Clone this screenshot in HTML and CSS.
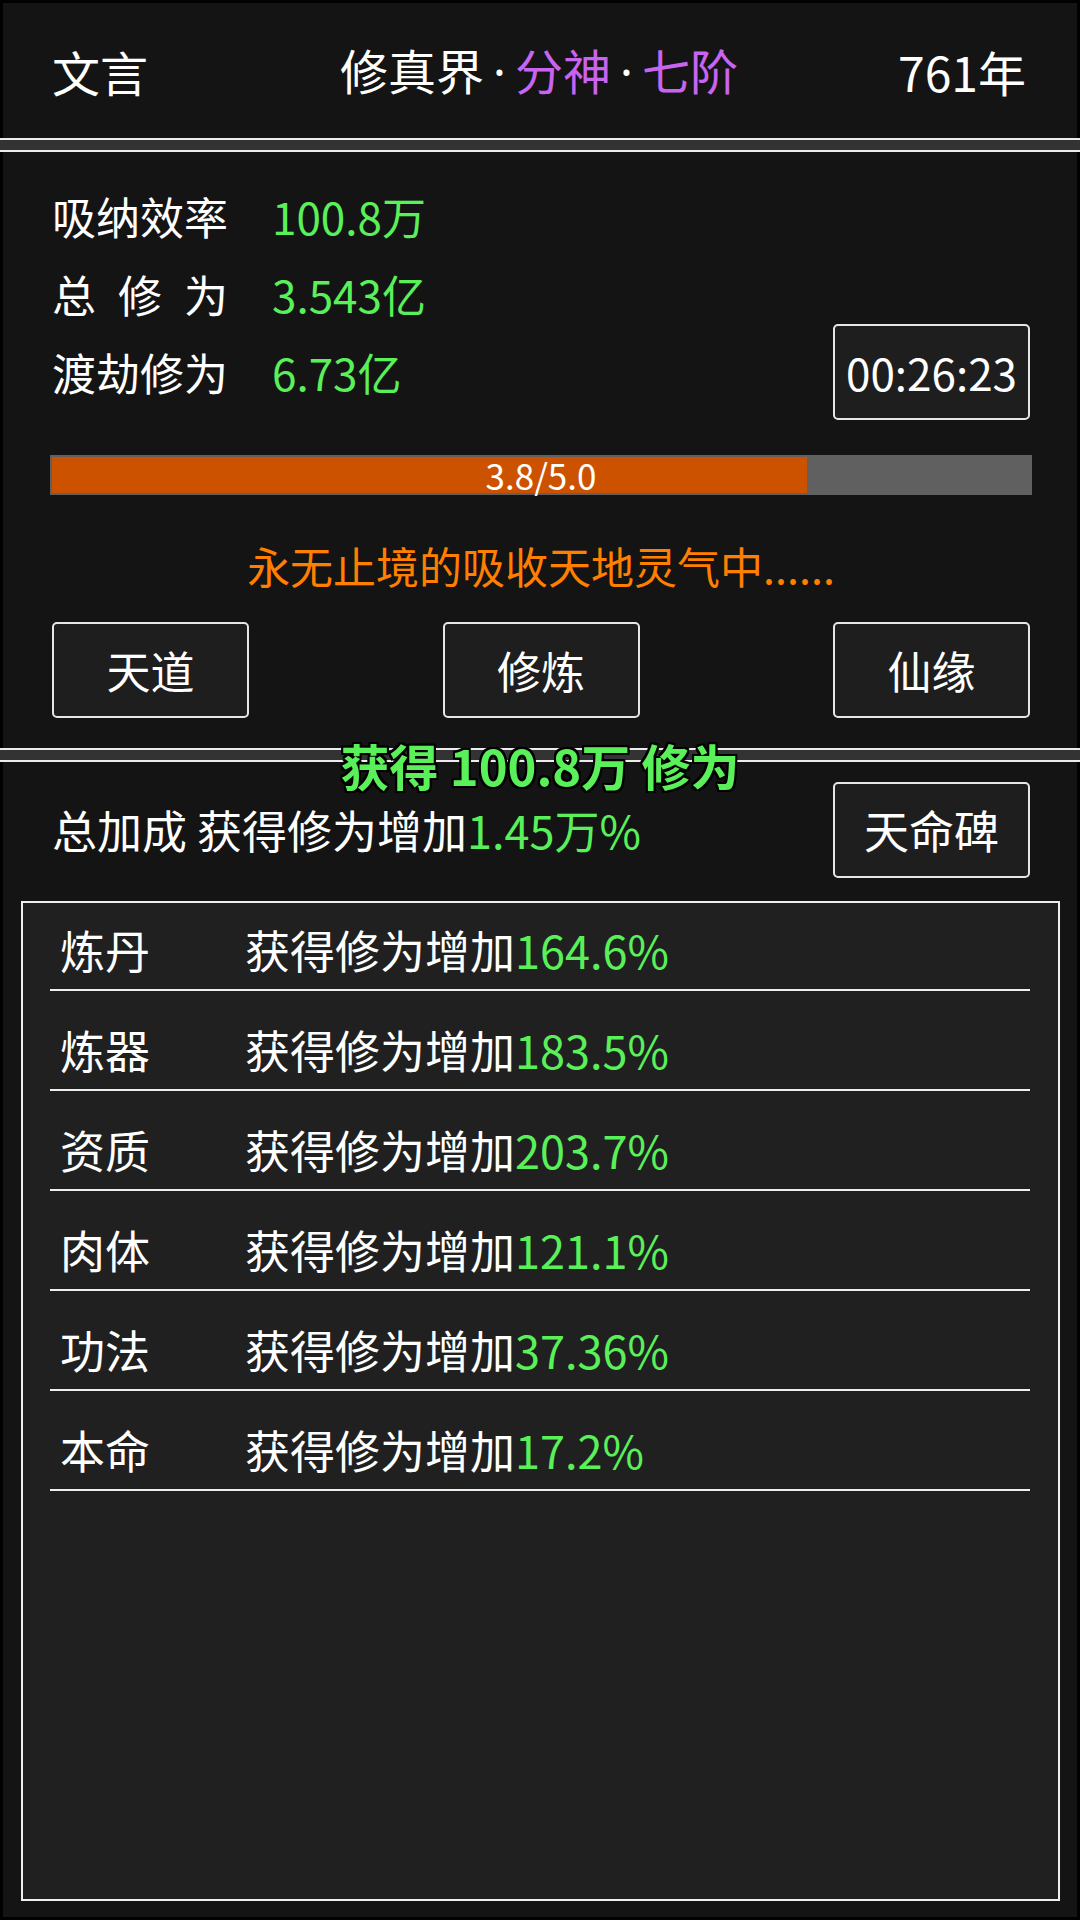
FILE: index.html
```html
<!DOCTYPE html>
<html lang="zh-CN">
<head>
<meta charset="utf-8">
<title>修真界</title>
<link rel="stylesheet" href="styles.css">
</head>
<body>
<div class="screen">
  <header class="panel top-bar">
    <div class="name">文言</div>
    <div class="title">修真界<span class="dot">·</span><span class="realm">分神</span><span class="dot">·</span><span class="realm">七阶</span></div>
    <div class="years">761年</div>
  </header>
  <div class="divider"></div>
  <section class="panel stats">
    <div class="stat-row"><span class="label">吸纳效率</span><span class="value">100.8万</span></div>
    <div class="stat-row"><span class="label spread"><span>总</span><span>修</span><span>为</span></span><span class="value">3.543亿</span></div>
    <div class="stat-row"><span class="label">渡劫修为</span><span class="value">6.73亿</span><div class="timer">00:26:23</div></div>
    <div class="progress"><div class="fill" style="width:77%"></div><span class="progress-text">3.8/5.0</span></div>
    <p class="status">永无止境的吸收天地灵气中......</p>
    <div class="actions">
      <div class="btn">天道</div>
      <div class="btn">修炼</div>
      <div class="btn">仙缘</div>
    </div>
  </section>
  <div class="divider"></div>
  <section class="panel bonus">
    <div class="gain-toast">获得 100.8万 修为</div>
    <div class="bonus-head">
      <div class="bonus-total">总加成 获得修为增加<span class="value">1.45万%</span></div>
      <div class="btn">天命碑</div>
    </div>
    <div class="list">
      <div class="row"><span class="row-name">炼丹</span><span>获得修为增加<span class="value">164.6%</span></span></div>
      <div class="row"><span class="row-name">炼器</span><span>获得修为增加<span class="value">183.5%</span></span></div>
      <div class="row"><span class="row-name">资质</span><span>获得修为增加<span class="value">203.7%</span></span></div>
      <div class="row"><span class="row-name">肉体</span><span>获得修为增加<span class="value">121.1%</span></span></div>
      <div class="row"><span class="row-name">功法</span><span>获得修为增加<span class="value">37.36%</span></span></div>
      <div class="row"><span class="row-name">本命</span><span>获得修为增加<span class="value">17.2%</span></span></div>
    </div>
  </section>
</div>
</body>
</html>
```

FILE: styles.css
```css
* {
  box-sizing: border-box;
  margin: 0;
  padding: 0;
}

html, body {
  width: 1080px;
  height: 1920px;
  background: #000;
}

body {
  font-family: "Noto Sans CJK SC", "Noto Sans", sans-serif;
  font-size: 44px;
  line-height: 1.2;
  color: #ffffff;
}

.screen {
  height: 1920px;
  display: flex;
  flex-direction: column;
  padding: 3px 0;
}

.panel {
  background: #141414;
  margin: 0 3px;
}

.divider {
  flex: none;
  height: 14px;
  background: #333;
  border-top: 2px solid #ececec;
  border-bottom: 2px solid #ececec;
}

/* header */
.top-bar {
  flex: none;
  height: 135px;
  display: grid;
  grid-template-columns: 1fr auto 1fr;
  align-items: center;
  padding: 0 51px 0 49px;
  font-size: 48px;
  line-height: 1;
}

.years {
  justify-self: end;
}

.dot {
  font-family: "Noto Sans", sans-serif;
  padding: 0 9px;
}

.realm {
  color: #c864f0;
}

/* stats */
.stats {
  flex: none;
  padding: 34px 47px 30px 49px;
}

.stat-row {
  display: flex;
  align-items: center;
  height: 60px;
}

.stat-row + .stat-row {
  margin-top: 18px;
}

.label {
  width: 176px;
  margin-right: 44px;
  flex: none;
}

.spread {
  display: flex;
  justify-content: space-between;
}

.value {
  color: #5af05a;
}

.timer {
  margin: -18px 0 -18px auto;
  width: 197px;
  height: 96px;
  border: 2px solid #e6e6e6;
  border-radius: 5px;
  background: #1e1e1e;
  display: flex;
  align-items: center;
  justify-content: center;
}

.progress {
  position: relative;
  margin: 53px -2px 0 -2px;
  height: 40px;
  background: #606060;
  padding: 2px 0 2px 2px;
}

.fill {
  height: 100%;
  background: #cc5200;
}

.progress-text {
  position: absolute;
  inset: 0;
  display: flex;
  align-items: center;
  justify-content: center;
  font-size: 35px;
}

.status {
  margin-top: 40px;
  height: 60px;
  line-height: 60px;
  text-align: center;
  font-size: 43px;
  color: #ff7f00;
}

.actions {
  margin-top: 27px;
  display: flex;
  justify-content: space-between;
}

.btn {
  flex: none;
  width: 197px;
  height: 96px;
  border: 2px solid #e6e6e6;
  border-radius: 5px;
  background: #1e1e1e;
  display: flex;
  align-items: center;
  justify-content: center;
}

/* bonus */
.bonus {
  flex: 1;
  position: relative;
  display: flex;
  flex-direction: column;
  padding: 20px 47px 16px 49px;
}

.gain-toast {
  position: absolute;
  top: -27px;
  left: 50%;
  transform: translateX(-50%);
  z-index: 2;
  white-space: nowrap;
  font-size: 49px;
  font-weight: 700;
  line-height: 60px;
  color: #5af05a;
  text-shadow:
    2px 0 0 #000, -2px 0 0 #000, 0 2px 0 #000, 0 -2px 0 #000,
    2px 2px 0 #000, -2px 2px 0 #000, 2px -2px 0 #000, -2px -2px 0 #000;
}

.bonus-head {
  display: flex;
  align-items: center;
  justify-content: space-between;
  font-size: 45px;
}

.list {
  flex: 1;
  margin: 23px -30px 0 -31px;
  border: 2px solid #efefef;
  background: #202020;
  padding: 0 28px 0 27px;
  font-size: 45px;
}

.row {
  height: 88px;
  padding: 8px 0 0 10px;
  border-bottom: 2px solid #eeeeee;
  display: flex;
  align-items: center;
}

.row + .row {
  margin-top: 12px;
}

.row-name {
  width: 185px;
  flex: none;
}
```
